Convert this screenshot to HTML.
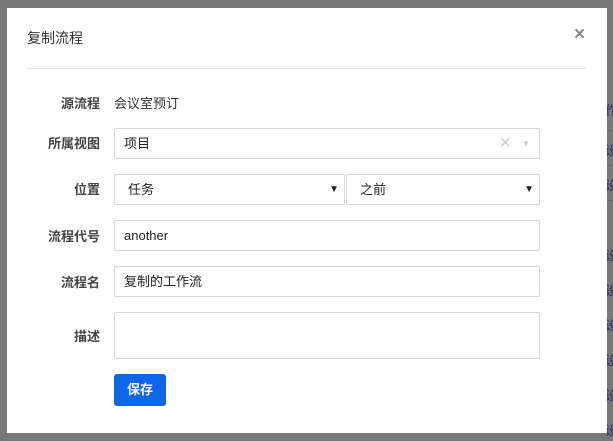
<!DOCTYPE html>
<html><head><meta charset="utf-8"><style>
body{margin:0;width:613px;height:441px;background:#787878;position:relative;overflow:hidden;font-family:"Liberation Sans","Noto Sans CJK SC",sans-serif;font-size:13px;color:#333}
.bg{position:absolute;left:607px;width:6px;height:1px;background:#6a6a6a}
.bgt{position:absolute;left:605px;color:#2a2a6a;font-size:13px}
.modal{position:absolute;left:7px;top:8px;width:600px;height:425px;background:#fff}
.title{position:absolute;left:20px;top:20px;font-size:14px;color:#333}
.close{position:absolute;left:567px;top:16px;font-size:19px;color:#888;font-weight:bold}
.hr{position:absolute;left:20px;top:60px;width:559px;height:1px;background:#e2e2e2}
.lbl{position:absolute;right:507px;font-weight:bold;color:#444;font-size:13px}
.in{position:absolute;left:107px;height:30px;border:1px solid #d6d6d6;border-radius:2px;box-sizing:border-box;width:426px;padding-left:9px;line-height:29px;font-size:13px;color:#222}
.arrow{position:absolute;font-size:10px;color:#222}
.btn{position:absolute;left:107px;top:366px;width:52px;height:32px;background:#0d67e8;border-radius:3px;color:#fff;font-weight:bold;text-align:center;line-height:32px;font-size:13px}
</style></head><body>
<div class="bg" style="top:130px"></div><div class="bg" style="top:165px"></div><div class="bg" style="top:200px"></div>
<div class="bgt" style="top:100px">作</div><div class="bgt" style="top:140px">设</div><div class="bgt" style="top:175px">设</div><div class="bgt" style="top:245px">设</div><div class="bgt" style="top:280px">设</div><div class="bgt" style="top:315px">设</div><div class="bgt" style="top:350px">设</div><div class="bgt" style="top:385px">设</div><div class="bgt" style="top:420px">设</div>
<div class="modal">
<div class="title">复制流程</div>
<div class="close">×</div>
<div class="hr"></div>
<div class="lbl" style="top:85px">源流程</div>
<div style="position:absolute;left:107px;top:85px;font-size:13px;color:#333">会议室预订</div>
<div class="lbl" style="top:125px">所属视图</div>
<div class="in" style="top:120px;height:31px">项目<span style="position:absolute;right:28px;top:0;color:#ccc;font-size:20px">×</span><span style="position:absolute;right:9px;top:0;color:#ccc;font-size:8px">▼</span></div>
<div class="lbl" style="top:171px">位置</div>
<div class="in" style="top:166px;width:231px;height:31px;padding-left:13px">任务<span class="arrow" style="right:5px;top:0">▼</span></div>
<div class="in" style="top:166px;left:339px;width:194px;height:31px;padding-left:13px">之前<span class="arrow" style="right:5px;top:0">▼</span></div>
<div class="lbl" style="top:218px">流程代号</div>
<div class="in" style="top:212px;height:31px">another</div>
<div class="lbl" style="top:264px">流程名</div>
<div class="in" style="top:258px;height:31px">复制的工作流</div>
<div class="lbl" style="top:318px">描述</div>
<div class="in" style="top:304px;height:47px"></div>
<div class="btn">保存</div>
</div>
</body></html>
